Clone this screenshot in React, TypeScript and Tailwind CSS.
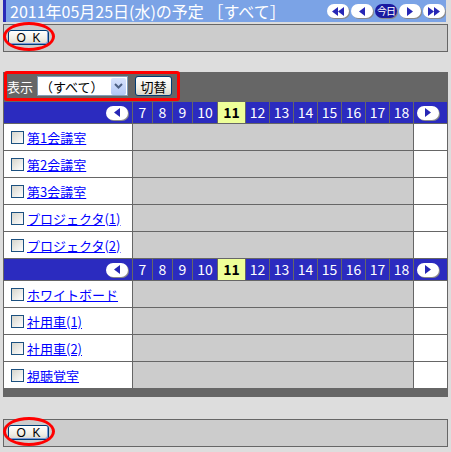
const hours = [
  { h: 7 },
  { h: 8 },
  { h: 9 },
  { h: 10 },
  { h: 11, today: true },
  { h: 12 },
  { h: 13 },
  { h: 14 },
  { h: 15 },
  { h: 16 },
  { h: 17 },
  { h: 18 },
];

const groupA = ["第1会議室", "第2会議室", "第3会議室", "プロジェクタ(1)", "プロジェクタ(2)"];
const groupB = ["ホワイトボード", "社用車(1)", "社用車(2)", "視聴覚室"];

function Tri({ dir, double }: { dir: "l" | "r"; double?: boolean }) {
  const one = dir === "l" ? "M7 1 L1 5.5 L7 10 Z" : "M1 1 L7 5.5 L1 10 Z";
  const two = dir === "l" ? "M13 1 L7 5.5 L13 10 Z" : "M7 1 L13 5.5 L7 10 Z";
  return (
    <svg width={double ? 14 : 8} height="11" viewBox={double ? "0 0 14 11" : "0 0 8 11"}>
      <path d={one} fill="#2626b5" />
      {double && <path d={two} fill="#2626b5" />}
    </svg>
  );
}

function Pill({ children, dark }: { children: React.ReactNode; dark?: boolean }) {
  return (
    <span
      className={`flex h-[14px] w-[22px] items-center justify-center rounded-full shadow-[1px_1px_0_#8a8a8a] ${
        dark ? "bg-[#1a1aa0]" : "bg-white"
      }`}
    >
      {children}
    </span>
  );
}

function OkPanel() {
  return (
    <div className="h-[28px] w-[445px] border border-[#666666] bg-[#cccccc] pl-[4px] pt-[5px]">
      <div className="relative w-[41px]">
        <button
          type="button"
          className="flex h-[15px] w-[41px] items-center justify-center whitespace-pre rounded-[3px] border border-[#003c74] bg-[linear-gradient(#ffffff,#f0efe6_60%,#dcdad0)] font-['Liberation_Sans',sans-serif] text-[12px] leading-none text-black shadow-[inset_-1px_-1px_0_#7a9ad8]"
        >
          O  K
        </button>
        <span className="pointer-events-none absolute left-[-5px] top-[-8px] h-[29px] w-[52px] rounded-[50%] border-[3px] border-[#ff0000]" />
      </div>
    </div>
  );
}

function Checkbox() {
  return (
    <span className="inline-block h-[13px] w-[13px] border border-[#1c5180] bg-[linear-gradient(135deg,#d6d5cc,#ffffff)]" />
  );
}

function HeaderRow() {
  return (
    <>
      <div className="flex h-[21px] items-center justify-end bg-[#2b2bbf] pr-[4px]">
        <Pill>
          <Tri dir="l" />
        </Pill>
      </div>
      {hours.map((x) =>
        x.today ? (
          <div
            key={x.h}
            className="flex items-center justify-center bg-[#eeff99] text-[14px] font-bold text-black"
          >
            {x.h}
          </div>
        ) : (
          <div key={x.h} className="flex items-center justify-center bg-[#2b2bbf] text-[14px] text-white">
            {x.h}
          </div>
        )
      )}
      <div className="flex items-center bg-[#2b2bbf] pl-[3px]">
        <Pill>
          <Tri dir="r" />
        </Pill>
      </div>
    </>
  );
}

function ItemRow({ name }: { name: string }) {
  return (
    <>
      <div className="flex h-[26px] items-center gap-[3px] bg-white pl-[7px]">
        <Checkbox />
        <a href="#" className="text-[13px] leading-none text-[#0000ff] underline">
          {name}
        </a>
      </div>
      <div className="col-span-12 bg-[#cccccc]" />
      <div className="bg-white" />
    </>
  );
}

export default function App() {
  return (
    <div className="flex h-[452px] w-[451px] flex-col bg-[#dddddd] pl-[3px] font-['Noto_Sans_CJK_JP',sans-serif]">
      <div className="flex h-[22px] w-[443px] items-center justify-between border-l-[3px] border-[#2a2ab8] bg-[#7ba3e6] pl-[4px] pr-[1px]">
        <span className="whitespace-pre text-[16px] leading-none text-white">2011年05月25日(水)の予定 ［すべて］</span>
        <div className="flex gap-[2px]">
          <Pill>
            <Tri dir="l" double />
          </Pill>
          <Pill>
            <Tri dir="l" />
          </Pill>
          <Pill dark>
            <span className="whitespace-nowrap text-[10px] leading-none tracking-[-1px] text-white">今日</span>
          </Pill>
          <Pill>
            <Tri dir="r" />
          </Pill>
          <Pill>
            <Tri dir="r" double />
          </Pill>
        </div>
      </div>

      <div className="mt-[2px]">
        <OkPanel />
      </div>

      <div className="mt-[20px] w-[445px] bg-[#666666] pb-[9px]">
        <div className="h-[30px]">
          <div className="-mt-px ml-px flex h-[30px] w-[176px] items-center rounded-[3px] border-[3px] border-[#ff0000]">
            <span className="text-[13px] leading-none text-white">表示</span>
            <div className="ml-[4px] flex h-[20px] w-[91px] items-center border border-[#7f9db9] bg-white">
              <span className="flex-1 pl-[2px] text-[13px] leading-none text-black">（すべて）</span>
              <span className="mr-px flex h-[17px] w-[15px] items-center justify-center rounded-[2px] bg-[linear-gradient(#d7e3fd,#b3c8f5)]">
                <svg width="9" height="6" viewBox="0 0 9 6">
                  <path d="M1 1 L4.5 4.5 L8 1" stroke="#4d6185" strokeWidth="2" fill="none" />
                </svg>
              </span>
            </div>
            <button
              type="button"
              className="ml-[7px] flex h-[20px] w-[37px] items-center justify-center rounded-[3px] border border-[#003c74] bg-[linear-gradient(#ffffff,#f0efe6_60%,#d8d5c8)] text-[13px] leading-none text-black"
            >
              切替
            </button>
          </div>
        </div>
        <div className="grid grid-cols-[128px_19px_19px_19px_24px_27px_23px_23px_23px_23px_23px_23px_23px_33px] gap-px p-px pb-0">
          <HeaderRow />
          {groupA.map((n) => (
            <ItemRow key={n} name={n} />
          ))}
          <HeaderRow />
          {groupB.map((n) => (
            <ItemRow key={n} name={n} />
          ))}
        </div>
      </div>

      <div className="mt-[22px]">
        <OkPanel />
      </div>
    </div>
  );
}
